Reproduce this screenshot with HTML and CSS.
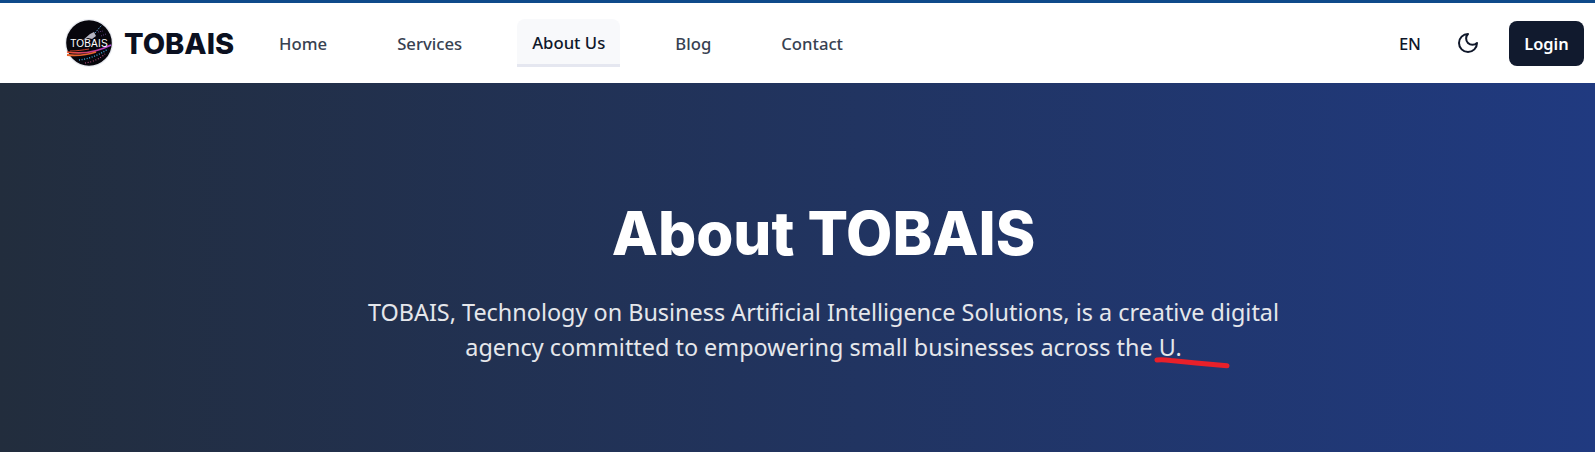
FILE: index.html
```html
<!DOCTYPE html>
<html lang="en">
<head>
  <meta charset="UTF-8">
  <title>About TOBAIS</title>
  <link rel="stylesheet" href="styles.css">
</head>
<body>

<header class="navbar">
  <a class="brand" href="#">
    <svg class="brand-logo" viewBox="0 0 48 48" aria-hidden="true">
      <defs>
        <linearGradient id="swoosh" x1="0" y1="0" x2="1" y2="0">
          <stop offset="0" stop-color="#f0552a"/>
          <stop offset="0.55" stop-color="#c23a8c"/>
          <stop offset="1" stop-color="#b44be0"/>
        </linearGradient>
      </defs>
      <circle cx="24" cy="24" r="24" fill="#e8eaf0"/>
      <circle cx="24" cy="24" r="22.8" fill="#07060c"/>
      <path d="M18 21 L25 15 L29 13 L31 17 L27 20 L23 19 Z" fill="#b4b4c0"/>
      <path d="M30 14 L35 8 L37 6" stroke="#5a9ed0" stroke-width="1" stroke-dasharray="1.5 1.2" fill="none"/>
      <path d="M33 13 L38 12 M36 17 L41 15" stroke="#7a4fa0" stroke-width="0.8" stroke-dasharray="1 1.2"/>
      <path d="M2 33 C14 35 30 34 46 26" stroke="url(#swoosh)" stroke-width="1.7" fill="none"/>
      <path d="M2 36 C12 37 22 36 31 33" stroke="#e8632c" stroke-width="1.8" fill="none"/>
      <path d="M5 32 C12 32 18 31 24 30" stroke="#d8482a" stroke-width="0.9" fill="none"/>
      <path d="M14 41 C24 40 34 36 43 30" stroke="#3fa6d8" stroke-width="1.4" stroke-dasharray="1 1.6" fill="none"/>
      <path d="M20 44 C28 43 36 39 40 35" stroke="#c8568c" stroke-width="1.1" stroke-dasharray="0.9 1.8" fill="none"/>
      <text x="24" y="28" class="logo-text" text-anchor="middle">TOBAIS</text>
    </svg>
    <span class="brand-name">TOBAIS</span>
  </a>

  <nav class="nav-links">
    <a href="#">Home</a>
    <a href="#">Services</a>
    <a href="#" class="active">About Us</a>
    <a href="#">Blog</a>
    <a href="#">Contact</a>
  </nav>

  <div class="nav-actions">
    <button class="lang-btn">EN</button>
    <button class="theme-btn" aria-label="Toggle theme">
      <svg viewBox="0 0 24 24" width="24" height="24" fill="none" stroke="#0f172a" stroke-width="2" stroke-linecap="round" stroke-linejoin="round"><path d="M12 3a6 6 0 0 0 9 9 9 9 0 1 1-9-9Z"/></svg>
    </button>
    <button class="login-btn">Login</button>
  </div>
</header>

<section class="hero">
  <h1>About TOBAIS</h1>
  <p class="hero-text">
    TOBAIS, Technology on Business Artificial Intelligence Solutions, is a creative digital agency committed to empowering small businesses across the U.
  </p>
  <svg class="scribble" viewBox="0 0 76 12" aria-hidden="true"><path d="M3 3 C7 2.2 11 2.6 17 3.4 L42 6 L73 8.8" fill="none" stroke="#e8202a" stroke-width="5" stroke-linecap="round"/></svg>
</section>

</body>
</html>
```

FILE: styles.css
```css
* { box-sizing: border-box; }

body {
  margin: 0;
  font-family: "Noto Sans", Arial, sans-serif;
  background: #1f3578;
  overflow: hidden;
}

a { text-decoration: none; }

button {
  font-family: inherit;
  border: none;
  background: none;
  cursor: pointer;
}

.navbar {
  display: flex;
  align-items: center;
  height: 83px;
  padding: 0 11px 0 65px;
  background: #fff;
  border-top: 3px solid #0f4a8a;
}

.brand {
  display: flex;
  align-items: center;
  gap: 11px;
}

.brand-logo {
  width: 48px;
  height: 48px;
}

.logo-text {
  font-family: "Liberation Sans", Arial, sans-serif;
  font-size: 10px;
  letter-spacing: 0.2px;
  fill: #fff;
}

.brand-name {
  font-family: Inter, Arial, sans-serif;
  font-size: 29px;
  font-weight: 800;
  color: #0b1020;
}

.nav-links {
  display: flex;
  align-items: center;
  margin-left: 30px;
}

.nav-links a {
  padding: 14px 15px 9px;
  margin-right: 40px;
  font-size: 16.7px;
  font-weight: 500;
  line-height: 22px;
  color: #374151;
  border-bottom: 3px solid transparent;
  border-radius: 8px 8px 0 0;
}

.nav-links a.active {
  padding: 13px 15px 10px;
  color: #0f172a;
  background: #f8f9fb;
  border-bottom-color: #e5e7f0;
}

.nav-actions {
  display: flex;
  align-items: center;
  margin-left: auto;
}

.lang-btn {
  font-size: 16.6px;
  font-weight: 500;
  color: #0f172a;
  padding: 0;
}

.theme-btn {
  display: flex;
  padding: 0;
  margin: 0 29px 0 35px;
}

.login-btn {
  width: 75px;
  height: 45px;
  font-size: 16.4px;
  font-weight: 600;
  color: #fff;
  background: #111a2e;
  border-radius: 8px;
}

.hero {
  position: relative;
  height: 369px;
  padding: 108px 0 0 52px;
  text-align: center;
  color: #fff;
  background: linear-gradient(90deg, #222d3d 0%, #203a80 100%);
}

.hero h1 {
  margin: 0 0 20px;
  font-family: Inter, Arial, sans-serif;
  font-size: 60px;
  font-weight: 800;
  line-height: 84px;
}

.hero-text {
  width: 940px;
  margin: 0 auto;
  font-size: 23.4px;
  line-height: 35px;
  color: #e5e7eb;
}

/* hand-drawn mark from the screenshot, sits over the text */
.scribble {
  position: absolute;
  left: 1154px;
  top: 274px;
  width: 76px;
  height: 12px;
}
```
